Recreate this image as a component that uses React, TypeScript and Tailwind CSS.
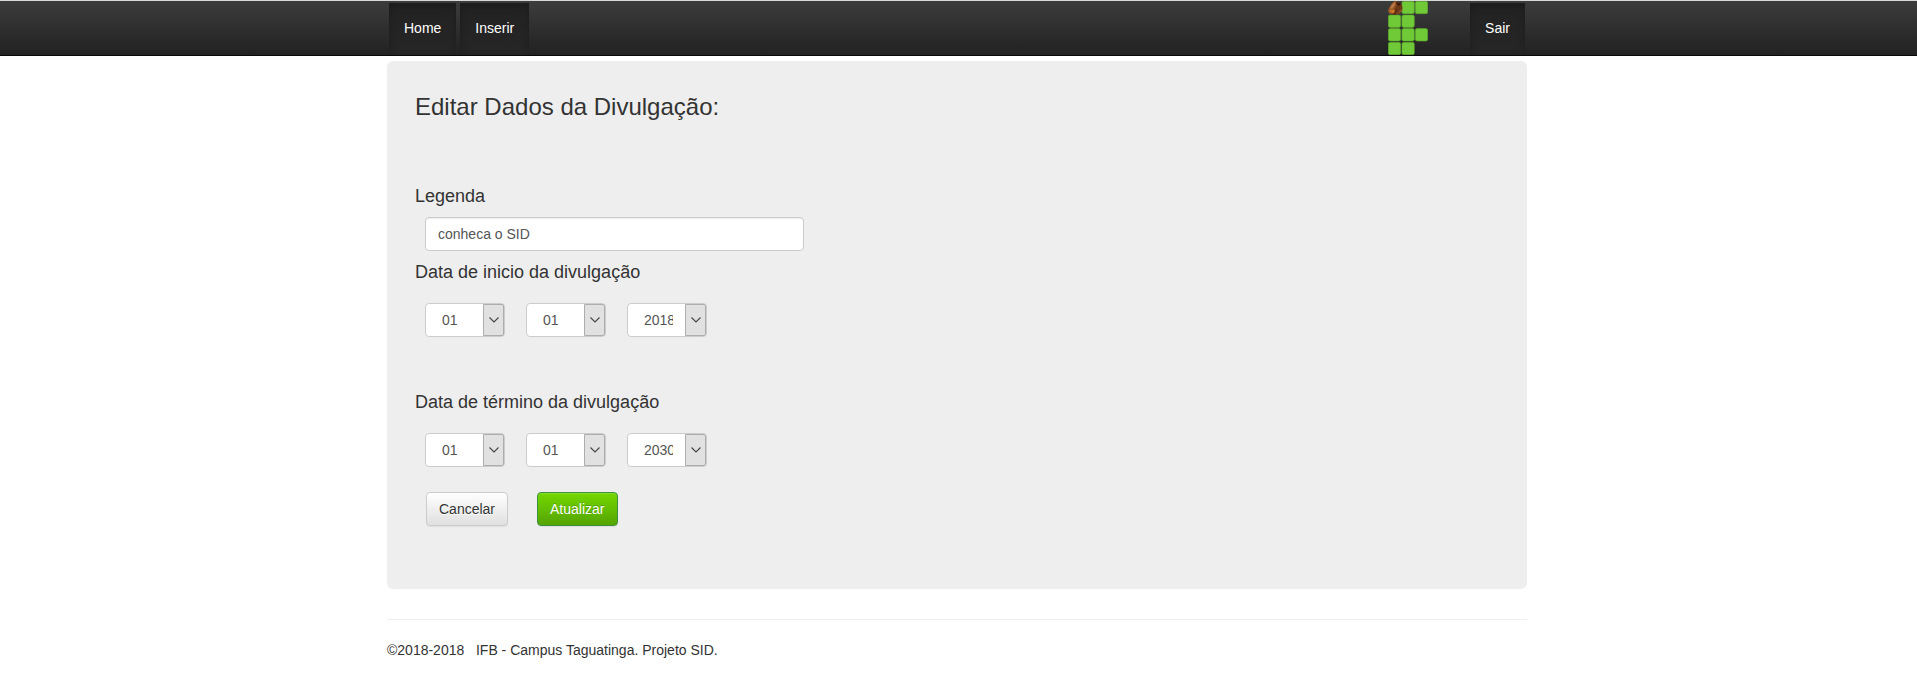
import React from "react";

const days = Array.from({ length: 31 }, (_, i) => String(i + 1).padStart(2, "0"));
const months = Array.from({ length: 12 }, (_, i) => String(i + 1).padStart(2, "0"));
const years = Array.from({ length: 23 }, (_, i) => String(2018 + i));

function NavLink({ children }: { children: React.ReactNode }) {
  return (
    <a
      href="#"
      className="h-[52px] bg-gradient-to-b from-[#222] to-[#262626] px-[15px] py-[15px] text-sm text-white shadow-[inset_0_3px_9px_rgba(0,0,0,0.2)]"
    >
      {children}
    </a>
  );
}

function Logo() {
  const tiles = [
    [13.6, 0], [27, 0],
    [0, 13.7], [13.6, 13.7],
    [0, 27.3], [13.6, 27.3], [27, 27.3],
    [0, 41], [13.6, 41],
  ];
  return (
    <svg width="40" height="54" viewBox="0 0 40 54" role="img" aria-label="IFB">
      <defs>
        <linearGradient id="nut" x1="0" y1="0" x2="1" y2="0.5">
          <stop offset="0" stopColor="#8a4a1c" />
          <stop offset="0.45" stopColor="#a8642c" />
          <stop offset="0.7" stopColor="#5a2a10" />
          <stop offset="1" stopColor="#8d5228" />
        </linearGradient>
      </defs>
      {tiles.map(([x, y]) => (
        <rect key={`${x}-${y}`} x={x + 0.3} y={y + 0.3} width="12.4" height="12.4" rx="1.8" fill="#70c936" stroke="#5aa62c" strokeWidth="0.6" />
      ))}
      <path d="M0 10 Q1 6 4 2.5 Q6 0 8.5 0.3 L13.5 3 Q15 6 14.5 9.5 L11 13 Q6 14.5 1.5 12.5 Z" fill="url(#nut)" />
      <path d="M2 7.5 Q4 3 7 1.2 Q7.5 4 5 6.5 Z" fill="#b9794a" />
      <path d="M7.5 0.5 L13.5 3 Q12 5 9 4 Z" fill="#3c1c0b" />
      <path d="M8 5 Q11 5 14 4.5 L14 8 Q11 10 8.5 9 Z" fill="#6b3818" />
      <path d="M2 10.5 Q4 8 7 9 Q7 11.5 5 12.5 Z" fill="#cf7a24" />
    </svg>
  );
}

function DatePart({ label, options, value }: { label: string; options: string[]; value: string }) {
  return (
    <div className="relative h-[34px] w-20">
      <select
        aria-label={label}
        defaultValue={value}
        className="h-full w-full appearance-none rounded border border-[#ccc] bg-white pr-[33px] pl-4 text-sm text-[#555]"
      >
        {options.map((o) => (
          <option key={o}>{o}</option>
        ))}
      </select>
      <span className="pointer-events-none absolute inset-y-px right-px flex w-[21px] items-center justify-center rounded-r-[2px] border border-[#adadad] bg-[#e1e1e1]">
        <svg width="10" height="6" viewBox="0 0 10 6" fill="none" stroke="#444" strokeWidth="1.1">
          <path d="M0.5 0.5 L5 5 L9.5 0.5" />
        </svg>
      </span>
    </div>
  );
}

function DateField({ legend, day, month, year }: { legend: string; day: string; month: string; year: string }) {
  return (
    <fieldset>
      <legend className="text-lg leading-5 text-[#333]">{legend}</legend>
      <div className="mt-[21px] ml-[10px] flex gap-[21px]">
        <DatePart label="Dia" options={days} value={day} />
        <DatePart label="Mês" options={months} value={month} />
        <DatePart label="Ano" options={years} value={year} />
      </div>
    </fieldset>
  );
}

export default function App() {
  return (
    <div className="bg-white font-['Liberation_Sans',Arial,sans-serif] text-sm leading-5 text-[#333]">
      <header className="border-t border-b border-t-[#d5dad8] border-b-[#080808] bg-gradient-to-b from-[#3c3c3c] to-[#222] pr-[3px]">
        <div className="mx-auto flex h-[54px] max-w-[1140px] items-start justify-between px-[2px]">
          <nav className="flex gap-1 pt-[2px]">
            <NavLink>Home</NavLink>
            <NavLink>Inserir</NavLink>
          </nav>
          <div className="flex gap-[42px]">
            <Logo />
            <div className="flex pt-[2px]">
              <NavLink>Sair</NavLink>
            </div>
          </div>
        </div>
      </header>

      <div className="pt-[5px] pr-[3px]">
        <main className="mx-auto max-w-[1140px] rounded-md bg-[#eee] px-7 pt-[33px] pb-[63px]">
          <h1 className="text-2xl leading-[26px]">Editar Dados da Divulgação:</h1>
          <form className="mt-[66px]" onSubmit={(e) => e.preventDefault()}>
            <label htmlFor="legenda" className="block text-lg leading-5">
              Legenda
            </label>
            <div className="mt-[11px] mb-[11px] ml-[10px] max-w-[379px]">
              <input
                id="legenda"
                type="text"
                defaultValue="conheca o SID"
                className="h-[34px] w-full rounded border border-[#ccc] bg-white px-3 text-sm text-[#555] shadow-[inset_0_1px_1px_rgba(0,0,0,0.075)]"
              />
            </div>
            <DateField legend="Data de inicio da divulgação" day="01" month="01" year="2018" />
            <div className="mt-[55px]">
              <DateField legend="Data de término da divulgação" day="01" month="01" year="2030" />
            </div>
            <div className="mt-[25px] ml-[11px] flex gap-[29px]">
              <button
                type="button"
                className="h-[34px] rounded border border-[#ccc] bg-gradient-to-b from-white to-[#e0e0e0] px-3 text-sm text-[#333] shadow-[inset_0_1px_0_rgba(255,255,255,0.15),0_1px_1px_rgba(0,0,0,0.075)] [text-shadow:0_1px_0_#fff]"
              >
                Cancelar
              </button>
              <button
                type="submit"
                className="h-[34px] rounded border border-[#3e8f3e] bg-gradient-to-b from-[#73d800] to-[#55a400] px-3 text-sm text-white shadow-[inset_0_1px_0_rgba(255,255,255,0.15),0_1px_1px_rgba(0,0,0,0.075)] [text-shadow:0_-1px_0_rgba(0,0,0,0.2)]"
              >
                Atualizar
              </button>
            </div>
          </form>
        </main>

        <footer className="mx-auto mt-[30px] max-w-[1140px] border-t border-[#eee] pt-5 pb-7">
          <p>©2018-2018 &nbsp; IFB - Campus Taguatinga. Projeto SID.</p>
        </footer>
      </div>
    </div>
  );
}
